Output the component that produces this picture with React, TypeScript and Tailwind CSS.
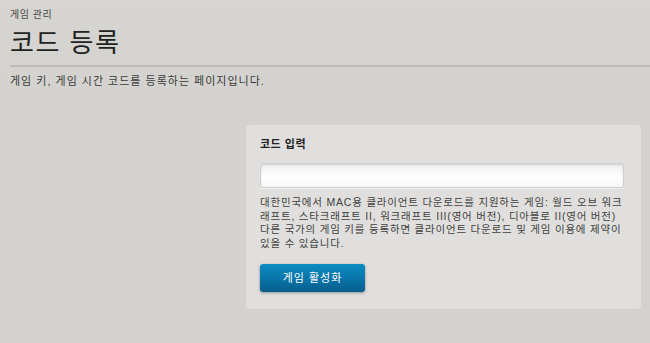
import React from 'react';

const font = { fontFamily: '"Liberation Sans", "Noto Sans CJK KR", sans-serif' };

export default function App() {
  return (
    <div
      className="w-[650px] h-[343px] overflow-hidden bg-[linear-gradient(180deg,#d6d5d1_0%,#d3d2ce_30%,#d3d2ce_100%)] text-[#333]"
      style={font}
    >
      {/* header */}
      <div className="pl-[10px] pt-[9px]">
        <div className="text-[10px] leading-[12px] text-[#4a4a4a] tracking-[0.5px]">게임 관리</div>
        <h1 className="mt-[7px] text-[26px] leading-[30px] text-[#222] tracking-[1.5px]">코드 등록</h1>
        <div className="mt-[7px] h-[2px] bg-[#bcbab6]" />
        <p className="mt-[7px] text-[11px] leading-[14px] text-[#3a3a3a] tracking-[1px]">
          게임 키, 게임 시간 코드를 등록하는 페이지입니다.
        </p>
      </div>

      {/* card */}
      <div className="mt-[37px] ml-[246px] w-[395px] h-[184px] rounded-[4px] bg-[#e0dfdd] px-[14px] pt-[12px]">
        <div className="text-[11px] leading-[14px] font-bold text-[#222] tracking-[0.5px]">코드 입력</div>
        <input
          className="mt-[12px] block w-[364px] h-[25px] rounded-[3px] border border-[#d2d0cd] bg-[linear-gradient(180deg,#ececec_0%,#ffffff_55%,#f6f6f6_100%)] shadow-[inset_0_1px_2px_rgba(0,0,0,0.12),0_1px_1px_rgba(255,255,255,0.6)] outline-none"
        />
        <p className="mt-[8px] text-[10.5px] leading-[13.7px] text-[#3f3f3f] whitespace-nowrap tracking-[0.8px]">
          대한민국에서 MAC용 클라이언트 다운로드를 지원하는 게임: 월드 오브 워크
          <br />
          래프트, 스타크래프트 II, 워크래프트 III(영어 버전), 디아블로 II(영어 버전)
          <br />
          다른 국가의 게임 키를 등록하면 클라이언트 다운로드 및 게임 이용에 제약이
          <br />
          있을 수 있습니다.
        </p>
        <button className="mt-[13px] flex items-center justify-center w-[105px] h-[28px] rounded-[3px] bg-[linear-gradient(180deg,#0b8cc2_0%,#0a76aa_50%,#065d8c_100%)] text-white text-[11px] tracking-[1px] shadow-[0_1px_3px_rgba(0,0,0,0.35)]">
          게임 활성화
        </button>
      </div>
    </div>
  );
}
